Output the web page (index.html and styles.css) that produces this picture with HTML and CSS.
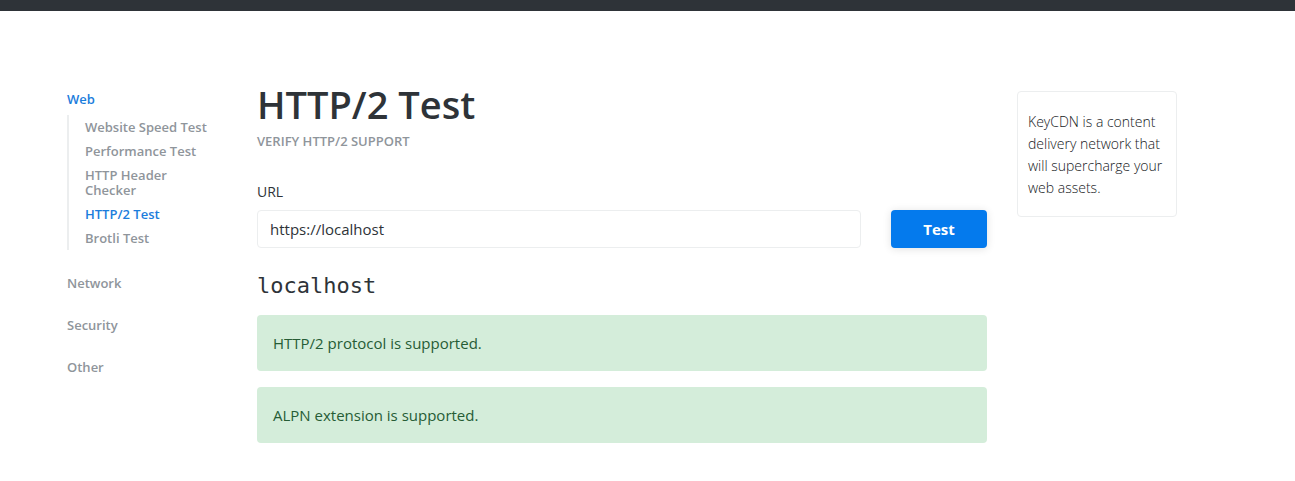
FILE: index.html
```html
<!DOCTYPE html>
<html lang="en">
<head>
<meta charset="utf-8">
<meta name="viewport" content="width=device-width, initial-scale=1">
<title>HTTP/2 Test</title>
<link rel="stylesheet" href="styles.css">
</head>
<body>
<header class="topbar"></header>
<div class="layout">
  <nav class="sidebar" aria-label="Tools">
    <a class="group active" href="#web">Web</a>
    <ul class="sublist">
      <li><a href="#speed">Website Speed Test</a></li>
      <li><a href="#performance">Performance Test</a></li>
      <li><a href="#header">HTTP Header Checker</a></li>
      <li><a class="active" href="#http2">HTTP/2 Test</a></li>
      <li><a href="#brotli">Brotli Test</a></li>
    </ul>
    <a class="group" href="#network">Network</a>
    <a class="group" href="#security">Security</a>
    <a class="group" href="#other">Other</a>
  </nav>
  <main class="content">
    <h1 class="title">HTTP/2 Test</h1>
    <p class="subtitle">VERIFY HTTP/2 SUPPORT</p>
    <form class="form">
      <label class="label" for="url">URL</label>
      <div class="form-row">
        <input class="field" id="url" type="text" value="https://localhost">
        <button class="button" type="button">Test</button>
      </div>
    </form>
    <h2 class="host">localhost</h2>
    <div class="alert">HTTP/2 protocol is supported.</div>
    <div class="alert">ALPN extension is supported.</div>
  </main>
  <aside class="promo">KeyCDN is a content delivery network that will supercharge your web assets.</aside>
</div>
</body>
</html>
```
FILE: styles.css
```css
* {
  box-sizing: border-box;
}

body {
  margin: 0;
  background: #fff;
  color: #2e3338;
  font-family: "Open Sans", "Noto Sans", sans-serif;
  font-size: 15px;
  line-height: 24px;
}

a {
  color: inherit;
  text-decoration: none;
}

.topbar {
  height: 11px;
  background: #2e3338;
}

.layout {
  display: grid;
  grid-template-columns: 160px minmax(0, 1fr) 160px;
  gap: 30px;
  align-items: start;
  max-width: 1244px;
  padding: 80px 67px 32px;
}

.sidebar {
  padding: 1px 12px 0 0;
  color: #8f959b;
  font-size: 13px;
  font-weight: 600;
  line-height: 15px;
}

.group {
  display: block;
  margin-bottom: 27px;
}

.group.active {
  margin-bottom: 8px;
}

.sidebar .active {
  color: #1b7ddc;
}

.sublist {
  display: flex;
  flex-direction: column;
  gap: 9px;
  margin: 0 0 26px;
  padding: 5px 0 4px 16px;
  border-left: 2px solid #eceeef;
  list-style: none;
}

.content {
  margin-top: -12px;
}

.title {
  margin: 0;
  font-size: 38px;
  font-weight: 600;
  line-height: 50px;
}

.subtitle {
  margin: 0 0 27px;
  color: #8f959b;
  font-size: 13px;
  font-weight: 600;
  line-height: 24px;
}

.label {
  display: block;
  margin-bottom: 6px;
  font-size: 14px;
  line-height: 24px;
}

.form-row {
  display: grid;
  grid-template-columns: minmax(0, 1fr) 96px;
  gap: 30px;
}

.field {
  height: 38px;
  padding: 0 12px;
  border: 1px solid #eceeef;
  border-radius: 4px;
  background: #fff;
  color: inherit;
  font: inherit;
}

.button {
  height: 38px;
  border: 0;
  border-radius: 4px;
  background: #047aed;
  box-shadow: 0 1px 8px rgba(0, 0, 0, 0.12);
  color: #fff;
  font: inherit;
  font-weight: 700;
}

.host {
  margin: 25px 0 16px;
  font-family: "DejaVu Sans Mono", monospace;
  font-size: 22px;
  font-weight: 400;
  line-height: 26px;
}

.alert {
  margin-bottom: 16px;
  padding: 16px;
  border-radius: 4px;
  background: #d4edda;
  color: #265c35;
}

.promo {
  padding: 19px 10px 17px;
  border: 1px solid #eceeef;
  border-radius: 4px;
  color: #16191c;
  font-size: 14px;
  font-weight: 300;
  line-height: 22px;
}
```
